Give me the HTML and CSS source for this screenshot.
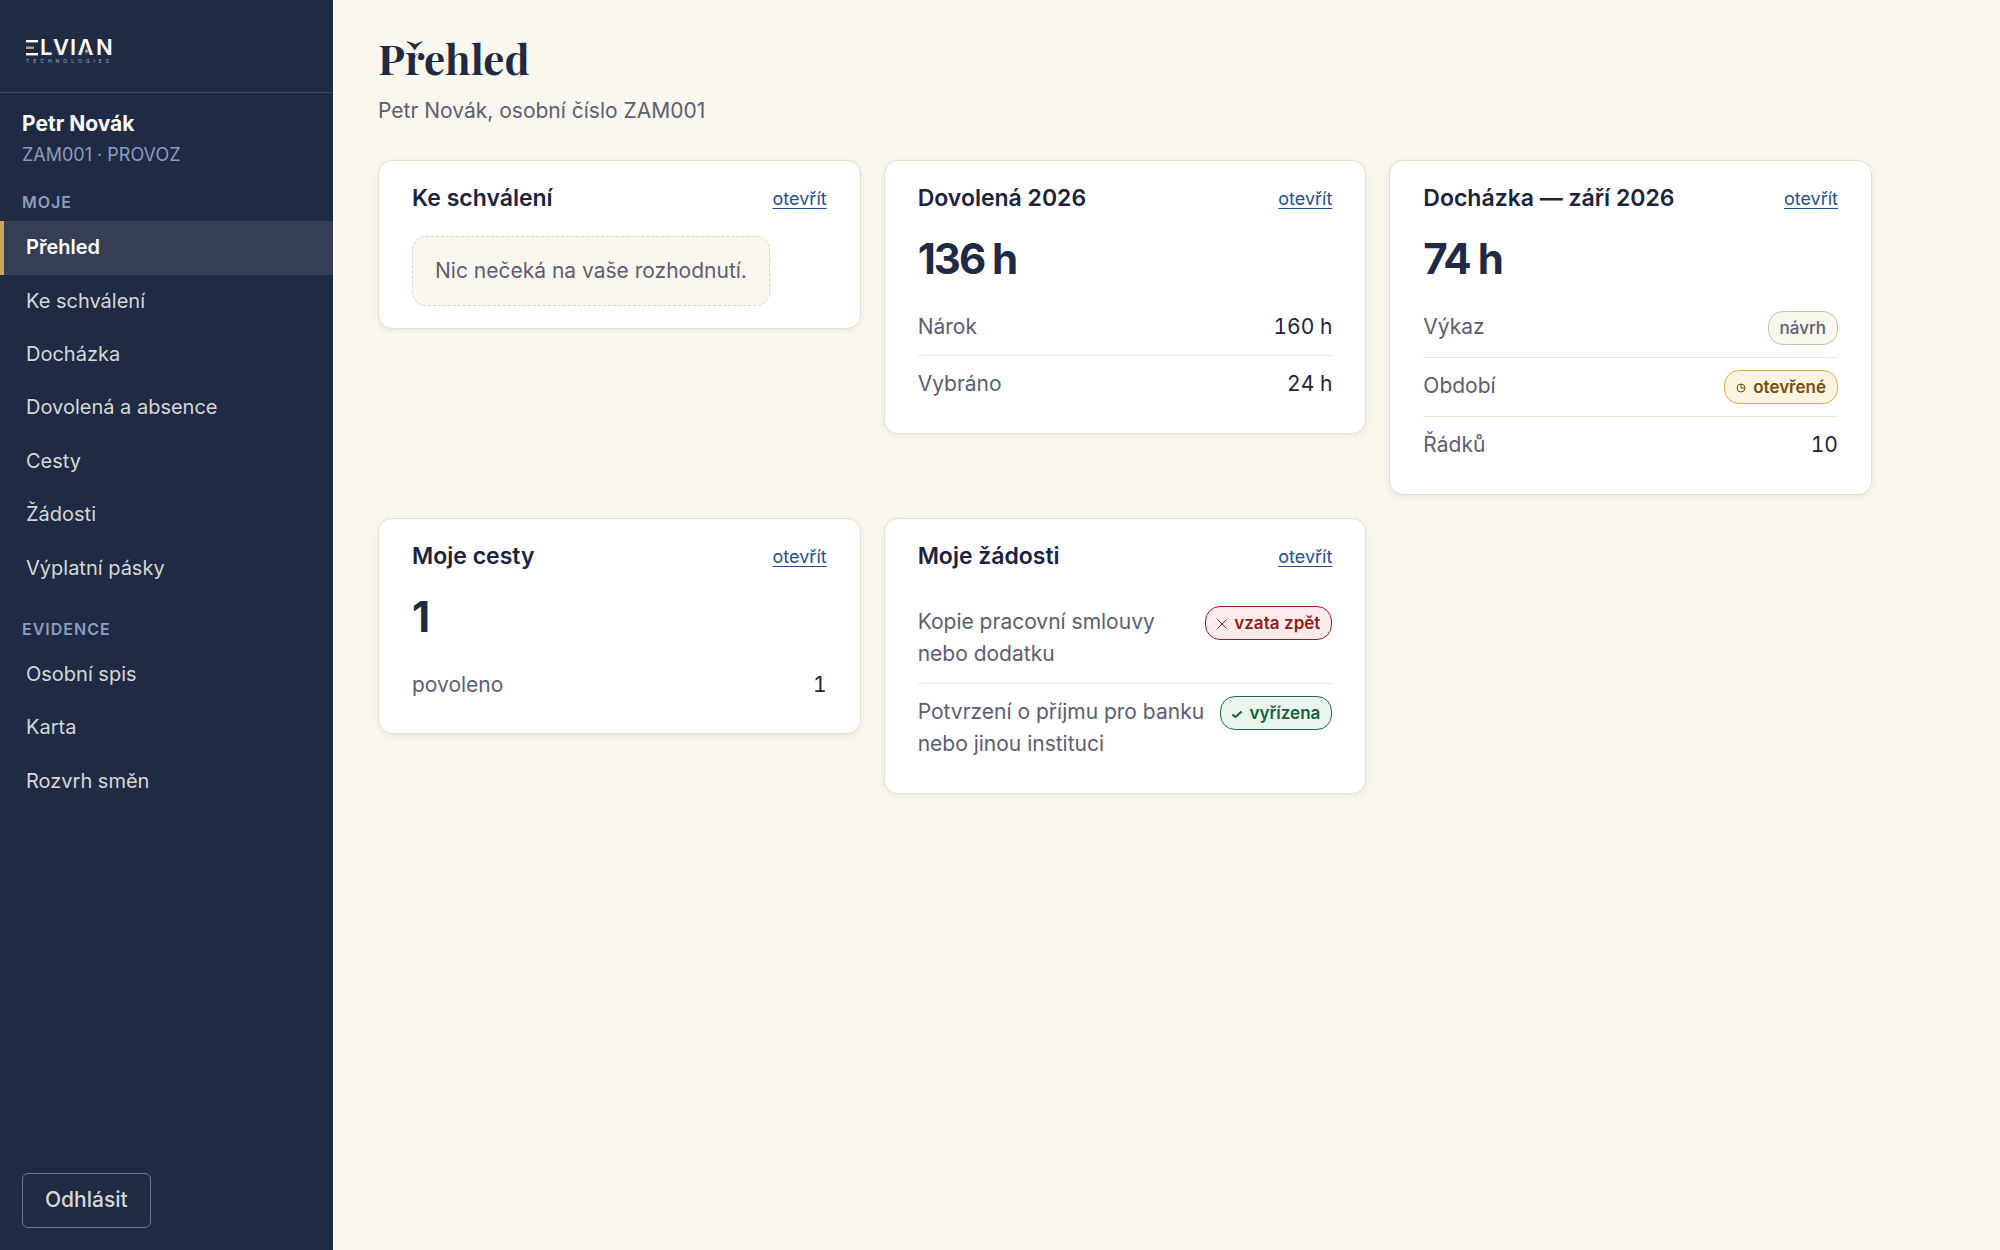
FILE: index.html
```html
<!DOCTYPE html>
<html lang="cs">
<head>
  <meta charset="utf-8">
  <meta name="viewport" content="width=device-width, initial-scale=1">
  <title>Přehled</title>
  <link rel="stylesheet" href="styles.css">
</head>
<body>
  <div class="app">
    <aside class="sidebar">
      <div class="brand">
        <svg class="brand-logo" width="100" height="40" viewBox="0 -8 100 40" role="img" aria-label="Elvian Technologies">
          <g class="logo-light">
            <rect x="1" y="2" width="12" height="2.4"/>
            <rect x="1" y="15" width="12" height="2.4"/>
          </g>
          <rect class="logo-gold" x="1" y="8.500" width="8" height="2.4"/>
          <text class="logo-word" y="17" x="15 28 45 52.500 71">LVIΛN</text>
          <path class="logo-gold" d="M61.500 11l2 2.300-2 2.300-2-2.300z"/>
          <text class="logo-sub" x="1" y="25">TECHNOLOGIES</text>
        </svg>
      </div>
      <div class="user">
        <div class="user-name">Petr Novák</div>
        <div class="user-meta">ZAM001 · PROVOZ</div>
      </div>
      <nav class="nav">
        <h2 class="nav-label">Moje</h2>
        <a class="nav-link is-active" href="#prehled" aria-current="page">Přehled</a>
        <a class="nav-link" href="#schvaleni">Ke schválení</a>
        <a class="nav-link" href="#dochazka">Docházka</a>
        <a class="nav-link" href="#dovolena">Dovolená a absence</a>
        <a class="nav-link" href="#cesty">Cesty</a>
        <a class="nav-link" href="#zadosti">Žádosti</a>
        <a class="nav-link" href="#pasky">Výplatní pásky</a>
        <h2 class="nav-label">Evidence</h2>
        <a class="nav-link" href="#spis">Osobní spis</a>
        <a class="nav-link" href="#karta">Karta</a>
        <a class="nav-link" href="#rozvrh">Rozvrh směn</a>
      </nav>
      <div class="sidebar-foot">
        <button class="logout" type="button">Odhlásit</button>
      </div>
    </aside>

    <main class="main">
      <h1 class="page-title">Přehled</h1>
      <p class="page-sub">Petr Novák, osobní číslo ZAM001</p>

      <div class="cards">
        <section class="card">
          <header class="card-head"><h2 class="card-title">Ke schválení</h2><a class="card-link" href="#schvaleni">otevřít</a></header>
          <p class="empty">Nic nečeká na vaše rozhodnutí.</p>
        </section>

        <section class="card">
          <header class="card-head"><h2 class="card-title">Dovolená 2026</h2><a class="card-link" href="#dovolena">otevřít</a></header>
          <div class="figure">136 h</div>
          <dl class="rows">
            <div class="row"><dt>Nárok</dt><dd>160 h</dd></div>
            <div class="row"><dt>Vybráno</dt><dd>24 h</dd></div>
          </dl>
        </section>

        <section class="card">
          <header class="card-head"><h2 class="card-title">Docházka — září 2026</h2><a class="card-link" href="#dochazka">otevřít</a></header>
          <div class="figure">74 h</div>
          <dl class="rows">
            <div class="row"><dt>Výkaz</dt><dd class="badge badge-draft">návrh</dd></div>
            <div class="row"><dt>Období</dt><dd class="badge badge-open"><svg class="badge-icon" width="10" height="10" viewBox="0 0 10 10" aria-hidden="true"><circle cx="5" cy="5" r="4"/><path d="M5 1v4h4"/></svg>otevřené</dd></div>
            <div class="row"><dt>Řádků</dt><dd>10</dd></div>
          </dl>
        </section>

        <section class="card">
          <header class="card-head"><h2 class="card-title">Moje cesty</h2><a class="card-link" href="#cesty">otevřít</a></header>
          <div class="figure">1</div>
          <dl class="rows">
            <div class="row"><dt>povoleno</dt><dd>1</dd></div>
          </dl>
        </section>

        <section class="card">
          <header class="card-head"><h2 class="card-title">Moje žádosti</h2><a class="card-link" href="#zadosti">otevřít</a></header>
          <dl class="rows">
            <div class="row"><dt>Kopie pracovní smlouvy nebo dodatku</dt><dd class="badge badge-bad"><svg class="badge-icon" width="10" height="10" viewBox="0 0 10 10" aria-hidden="true"><path d="M0.500 0.500l9 9M9.500 0.500l-9 9"/></svg>vzata zpět</dd></div>
            <div class="row"><dt>Potvrzení o příjmu pro banku nebo jinou instituci</dt><dd class="badge badge-good"><svg class="badge-icon badge-check" width="10" height="10" viewBox="0 0 10 10" aria-hidden="true"><path d="M0.500 5.500l3 2.500 6-5.500"/></svg>vyřízena</dd></div>
          </dl>
        </section>
      </div>
    </main>
  </div>
</body>
</html>
```
FILE: styles.css
```css
*,
*::before,
*::after {
  box-sizing: border-box;
}

body {
  margin: 0;
  background: #faf7ee;
  color: #1b2340;
  font-family: Inter, "Liberation Sans", sans-serif;
  font-size: 21px;
  line-height: 1.55;
}

h1, h2, p, dl, dd {
  margin: 0;
}

.app {
  display: grid;
  grid-template-columns: 333px minmax(0, 1fr);
  min-height: 100vh;
}

/* Sidebar */
.sidebar {
  display: flex;
  flex-direction: column;
  background: #1f2a44;
  color: #d8d8d6;
}

.brand {
  padding: 30px 25px 22px;
  border-bottom: 1px solid #3f4a65;
}

.brand-logo {
  display: block;
}

.logo-light {
  fill: #fff;
}

.logo-gold {
  fill: #c9a55c;
}

.logo-word {
  fill: #fff;
  font-size: 22px;
  font-weight: 600;
}

.logo-sub {
  fill: #a3acc4;
  font-size: 5px;
  letter-spacing: 4px;
}

.user {
  padding: 15px 22px 0;
}

.user-name {
  color: #fff;
  font-weight: 700;
}

.user-meta {
  color: #8f9bbf;
  font-size: 18px;
}

.nav-label {
  margin: 22px 22px 6px;
  color: #8f9bbf;
  font-size: 16px;
  font-weight: 600;
  letter-spacing: 1px;
  text-transform: uppercase;
}

.nav-link {
  display: block;
  padding: 10px 22px 11px;
  border-left: 4px solid transparent;
  color: inherit;
  font-size: 20px;
  line-height: 1.62;
  text-decoration: none;
}

.nav-link.is-active {
  border-left-color: #c9a55c;
  background: #353e54;
  color: #fff;
  font-weight: 600;
}

.sidebar-foot {
  margin-top: auto;
  padding: 22px;
}

.logout {
  padding: 10px 22px;
  border: 1px solid #6b7589;
  border-radius: 6px;
  background: transparent;
  color: inherit;
  font: inherit;
  font-weight: 500;
}

/* Page */
.main {
  max-width: 1584px;
  padding: 33px 45px;
}

.page-title {
  color: #1f2a44;
  font-family: "Playfair Display", "Liberation Serif", serif;
  font-size: 42px;
  font-weight: 700;
  line-height: 50px;
}

.page-sub {
  margin: 12px 0 32px;
  color: #5b5d75;
}

.cards {
  display: grid;
  grid-template-columns: repeat(auto-fill, minmax(440px, 1fr));
  align-items: start;
  gap: 23px;
}

.card {
  padding: 22px 33px 20px;
  border: 1px solid #e4dfc9;
  border-radius: 14px;
  background: #fff;
  box-shadow: 0 2px 6px rgba(31, 42, 68, 0.08);
}

.card-head {
  display: flex;
  align-items: center;
  justify-content: space-between;
  gap: 16px;
  margin-bottom: 22px;
  line-height: 31px;
}

.card-title {
  font-size: 23px;
  font-weight: 600;
}

.card-link {
  color: #22508f;
  font-size: 18px;
  text-underline-offset: 3px;
}

.empty {
  width: fit-content;
  margin-bottom: 2px;
  padding: 18px 22px;
  border: 1px dashed #dcd9bf;
  border-radius: 14px;
  background: #faf7ee;
  color: #5b5d75;
}

.figure {
  margin-bottom: 17px;
  color: #1f2a44;
  font-size: 42px;
  font-weight: 700;
  letter-spacing: -2px;
  line-height: 46px;
}

.row {
  display: flex;
  align-items: baseline;
  justify-content: space-between;
  gap: 16px;
  padding: 12px 0;
}

.row + .row {
  border-top: 1px solid #ece8d6;
}

.row dt {
  color: #5b5d75;
}

.row dd {
  flex: none;
  font-variant-numeric: tabular-nums;
}

/* Status badges */
.badge {
  display: flex;
  align-items: baseline;
  gap: 7px;
  padding: 3px 11px;
  border: 1px solid;
  border-radius: 15px;
  font-size: 17px;
  font-weight: 600;
}

.badge-icon {
  fill: none;
  stroke: currentColor;
  stroke-width: 1;
}

.badge-check {
  stroke-width: 2;
}

.badge-draft {
  border-color: #c5c2ab;
  background: #faf7ee;
  color: #5b5d75;
  font-weight: 500;
}

.badge-open {
  border-color: #dcaa4c;
  background: #fdf3e1;
  color: #73500c;
}

.badge-bad {
  border-color: #9b1c1c;
  background: #fdeaea;
  color: #8f1c17;
}

.badge-good {
  border-color: #1c6b45;
  background: #e9f4ec;
  color: #17613c;
}
```
